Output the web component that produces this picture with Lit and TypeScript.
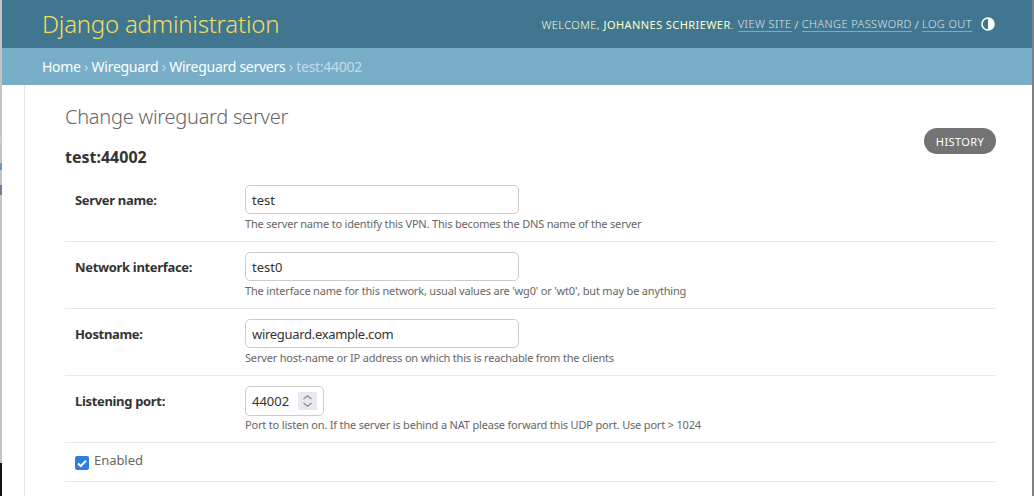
import { LitElement, html, css } from "lit";
import { customElement } from "lit/decorators.js";

const rows = [
  { label: "Server name:", value: "test", help: "The server name to identify this VPN. This becomes the DNS name of the server" },
  { label: "Network interface:", value: "test0", help: "The interface name for this network, usual values are 'wg0' or 'wt0', but may be anything" },
  { label: "Hostname:", value: "wireguard.example.com", help: "Server host-name or IP address on which this is reachable from the clients", tight: true },
];

@customElement("app-root")
export class AppRoot extends LitElement {
  static styles = css`
    :host {
      display: block;
      height: 496px;
      overflow: hidden;
      font-family: "Noto Sans", "Open Sans", sans-serif;
      color: #333;
      background: #fff;
    }
    .frame {
      display: flex;
      height: 496px;
    }
    .edge-left {
      width: 2px;
      flex: none;
      background: linear-gradient(
        #c4c4c4 136px,
        #d8c8c0 136px 143px,
        #c4c4c4 143px 163px,
        #6f96c8 163px 170px,
        #c4c4c4 170px 185px,
        #7a7a9c 185px 195px,
        #c4c4c4 195px
      );
      display: flex;
      flex-direction: column;
    }
    .edge-left .fill {
      flex: 1;
    }
    .edge-left .bottom {
      height: 33px;
      background: #111;
    }
    .edge-right {
      width: 2px;
      flex: none;
      background: #808080;
    }
    .page {
      flex: 1;
      min-width: 0;
    }
    .header {
      height: 48px;
      box-sizing: border-box;
      background: #417690;
      display: flex;
      align-items: center;
      justify-content: space-between;
      padding: 0 37px 0 40px;
    }
    .brand {
      color: #f5dd5d;
      font-size: 24px;
      font-weight: 300;
      line-height: 48px;
      letter-spacing: -0.24px;
    }
    .tools {
      display: flex;
      align-items: center;
      font-size: 11px;
      letter-spacing: 0.42px;
      color: #ffc;
      text-transform: uppercase;
      font-weight: 300;
    }
    .tools strong {
      font-weight: 400;
      margin-left: 4px;
    }
    .tools a {
      color: #fff;
      opacity: 0.8;
      border-bottom: 1px solid rgba(255, 255, 255, 0.45);
      line-height: 14px;
      margin: 0 3px;
    }
    .tools a:first-of-type {
      margin-left: 4px;
    }
    .tools svg {
      width: 14px;
      height: 14px;
      margin-left: 6px;
    }
    .crumbs {
      height: 37px;
      box-sizing: border-box;
      background: #79aec8;
      color: #c4dce8;
      font-size: 14px;
      letter-spacing: -0.27px;
      line-height: 37px;
      padding-left: 40px;
    }
    .crumbs a {
      color: #fff;
    }
    .body {
      margin-left: 22px;
      border-left: 1px solid #e5e5e5;
      padding: 19px 37px 0 40px;
      height: 411px;
      box-sizing: border-box;
    }
    .top {
      display: flex;
      justify-content: space-between;
    }
    h1 {
      margin: 0;
      font-size: 20px;
      font-weight: 300;
      color: #666;
      line-height: 26px;
      letter-spacing: -0.26px;
    }
    h2 {
      margin: 16px 0 7px;
      font-size: 16px;
      font-weight: 700;
      color: #333;
      line-height: 22px;
    }
    .history {
      margin: 24px -1px 0 0;
      height: 26px;
      width: 72px;
      border-radius: 13px;
      background: #737373;
      color: #fff;
      font-size: 11px;
      letter-spacing: 0.4px;
      display: flex;
      align-items: center;
      justify-content: center;
    }
    .row {
      display: flex;
      padding: 10px;
      border-bottom: 1px solid #e8e8e8;
      height: 46px;
    }
    .row.check {
      height: 18px;
      align-items: center;
    }
    .row label {
      width: 170px;
      flex: none;
      font-size: 13px;
      font-weight: 700;
      line-height: 31px;
      color: #333;
      letter-spacing: -0.33px;
    }
    .input {
      box-sizing: border-box;
      width: 274px;
      height: 29px;
      border: 1px solid #ccc;
      border-radius: 5px;
      font-size: 13px;
      line-height: 27px;
      padding: 1px 0 0 6px;
      color: #333;
    }
    .input.tight {
      letter-spacing: -0.3px;
    }
    .input.number {
      width: 79px;
      height: 30px;
      display: flex;
      align-items: center;
      justify-content: space-between;
      padding: 0 6px;
    }
    .spin {
      width: 19px;
      height: 18px;
      background: #e8e8ee;
    }
    .help {
      font-size: 11px;
      color: #666;
      line-height: 18px;
      margin-top: 1px;
      letter-spacing: -0.18px;
    }
    .number + .help {
      margin-top: 0;
    }
    .box {
      width: 14px;
      height: 14px;
      border-radius: 2px;
      background: #2f7de1;
      margin: 2px 5px 0 0;
    }
    .box svg {
      display: block;
    }
    .enabled {
      font-size: 13px;
      color: #666;
      margin-top: -4px;
      letter-spacing: -0.05px;
    }
  `;

  render() {
    return html`
      <div class="frame">
        <div class="edge-left"><div class="fill"></div><div class="bottom"></div></div>
        <div class="page">
          <div class="header">
            <div class="brand">Django administration</div>
            <div class="tools">
              Welcome, <strong>Johannes Schriewer</strong>.
              <a>View site</a> / <a>Change password</a> / <a>Log out</a>
              <svg viewBox="0 0 14 14"><circle cx="7" cy="7" r="6" fill="none" stroke="#fff" stroke-width="1.6"/><path d="M7 1a6 6 0 0 1 0 12z" fill="#fff"/></svg>
            </div>
          </div>
          <div class="crumbs"><a>Home</a> › <a>Wireguard</a> › <a>Wireguard servers</a> › test:44002</div>
          <div class="body">
            <div class="top">
              <div>
                <h1>Change wireguard server</h1>
                <h2>test:44002</h2>
              </div>
              <div class="history">HISTORY</div>
            </div>
            ${rows.map(r => html`
              <div class="row">
                <label>${r.label}</label>
                <div>
                  <div class="input ${r.tight ? "tight" : ""}">${r.value}</div>
                  <div class="help">${r.help}</div>
                </div>
              </div>
            `)}
            <div class="row">
              <label>Listening port:</label>
              <div>
                <div class="input number">44002
                  <svg class="spin" viewBox="0 0 19 18"><path d="M5.5 7l4-3.2 4 3.2M5.5 11l4 3.2 4-3.2" fill="none" stroke="#8a8a8a" stroke-width="1.2"/></svg>
                </div>
                <div class="help">Port to listen on. If the server is behind a NAT please forward this UDP port. Use port &gt; 1024</div>
              </div>
            </div>
            <div class="row check">
              <div class="box"><svg viewBox="0 0 14 14"><path d="M3 7.5l2.8 2.6L11 4.6" fill="none" stroke="#fff" stroke-width="2"/></svg></div>
              <span class="enabled">Enabled</span>
            </div>
          </div>
        </div>
        <div class="edge-right"></div>
      </div>
    `;
  }
}
